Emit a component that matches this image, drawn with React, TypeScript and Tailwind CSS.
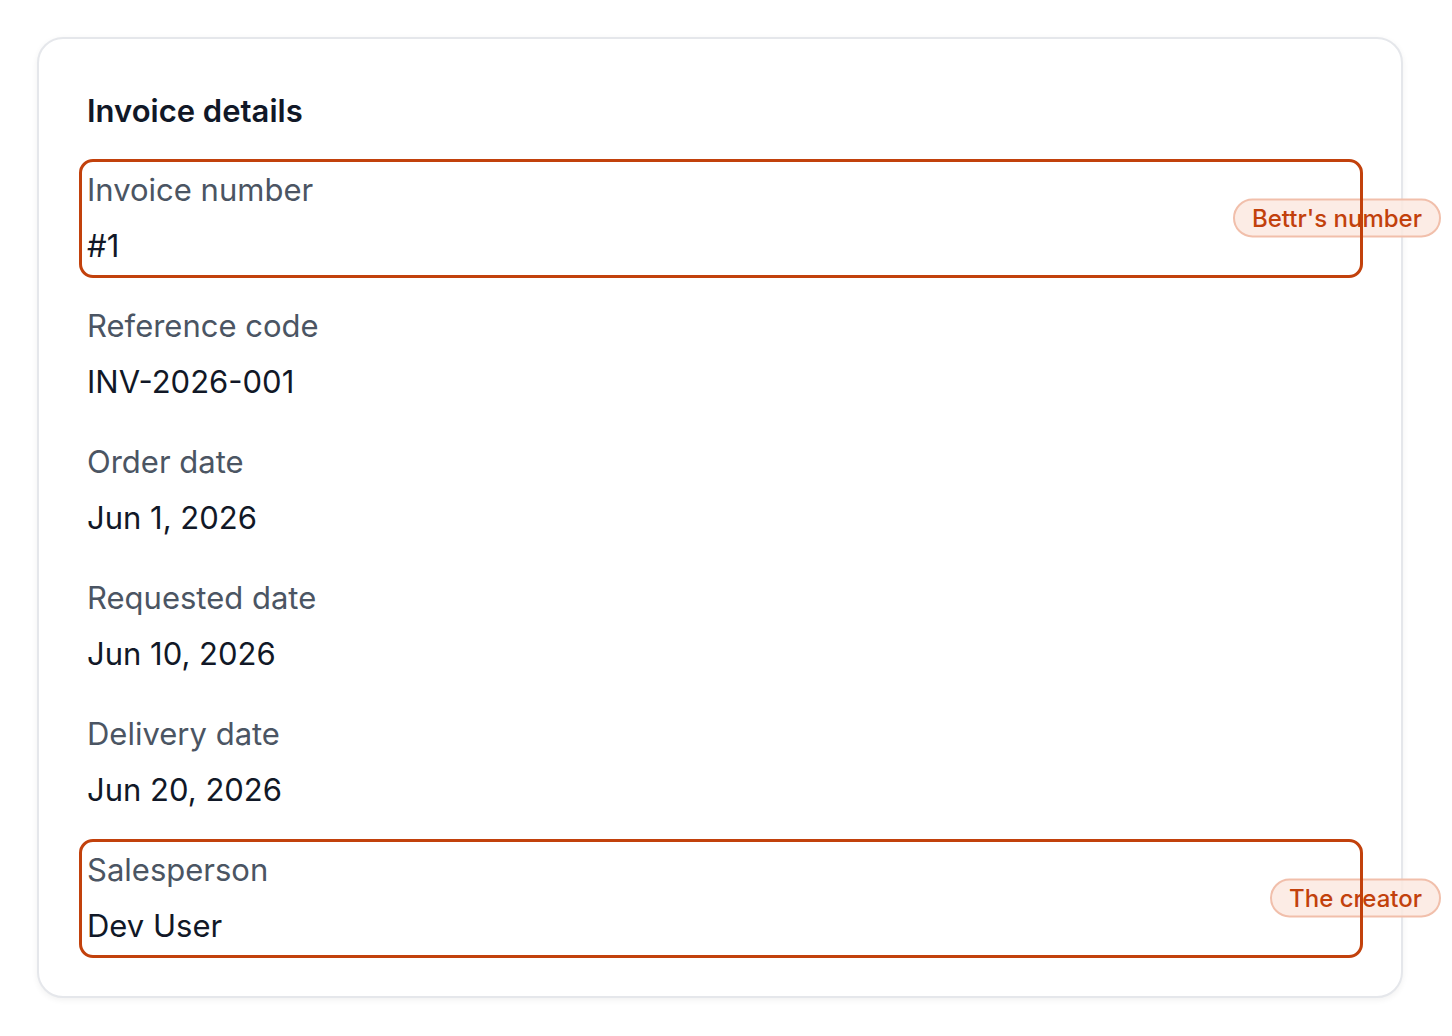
const rows = [
  { label: "Invoice number", value: "#1", note: "Bettr's number" },
  { label: "Reference code", value: "INV-2026-001" },
  { label: "Order date", value: "Jun 1, 2026" },
  { label: "Requested date", value: "Jun 10, 2026" },
  { label: "Delivery date", value: "Jun 20, 2026" },
  { label: "Salesperson", value: "Dev User", note: "The creator" },
];

function Field({ label, value, note }: { label: string; value: string; note?: string }) {
  return (
    <div className="relative flex flex-col gap-[10px]">
      <div className="text-[31px] leading-[46px] text-[#4b5563]">{label}</div>
      <div className="text-[31px] leading-[46px] text-[#111827]">{value}</div>
      {note && (
        <>
          <span className="absolute right-[-86px] top-1/2 -translate-y-1/2 z-0 rounded-full border-2 border-[#f1bfab] bg-[#fce9e1]/85 px-[17px] h-[39px] flex items-center text-[24px] font-medium text-[#c2410c] whitespace-nowrap">
            {note}
          </span>
          <div className="pointer-events-none absolute -left-[8px] -top-[8px] -bottom-[9px] right-[-8px] z-10 rounded-[14px] border-[3px] border-[#c2410c]" />
        </>
      )}
    </div>
  );
}

export default function App() {
  return (
    <div className="min-h-screen bg-white pl-[37px] pt-[37px]" style={{ fontFamily: "Inter, 'Noto Sans', sans-serif" }}>
      <div className="w-[1366px] h-[961px] rounded-[26px] border-2 border-[#e5e7eb] bg-white shadow-[0_2px_6px_rgba(0,0,0,0.06)] px-[48px] pt-[49px]">
        <h2 className="text-[31px] leading-[46px] font-semibold text-[#111827]">Invoice details</h2>
        <div className="mt-[33px] mr-[-2px] flex flex-col gap-[34px]">
          {rows.map((r) => (
            <Field key={r.label} {...r} />
          ))}
        </div>
      </div>
    </div>
  );
}
